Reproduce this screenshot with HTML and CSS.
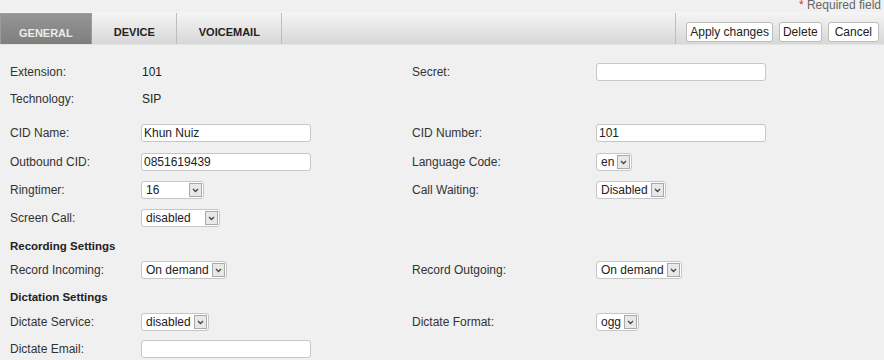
FILE: index.html
```html
<!DOCTYPE html>
<html lang="en">
<head>
    <meta charset="UTF-8">
    <title>Extension 101</title>
    <link rel="stylesheet" href="styles.css">
</head>
<body>
    <div class="required"><span class="star">*</span> Required field</div>

    <nav class="tabbar">
        <a href="#" class="tab active">GENERAL</a>
        <a href="#" class="tab">DEVICE</a>
        <a href="#" class="tab">VOICEMAIL</a>
        <div class="spacer"></div>
        <div class="actions">
            <button class="btn">Apply changes</button>
            <button class="btn">Delete</button>
            <button class="btn btn-cancel">Cancel</button>
        </div>
    </nav>

    <form class="form">
        <label class="lbl">Extension:</label>
        <span class="value">101</span>
        <label class="lbl r">Secret:</label>
        <input class="field" type="text" value="">

        <label class="lbl">Technology:</label>
        <span class="value">SIP</span>

        <label class="lbl">CID Name:</label>
        <input class="field" type="text" value="Khun Nuiz">
        <label class="lbl r">CID Number:</label>
        <input class="field" type="text" value="101">

        <label class="lbl">Outbound CID:</label>
        <input class="field" type="text" value="0851619439">
        <label class="lbl r">Language Code:</label>
        <span class="select"><span class="val">en</span><span class="arrow"><svg width="7" height="5" viewBox="0 0 7 5"><path d="M1 1l2.5 2.5L6 1" fill="none" stroke="#444" stroke-width="1.3"/></svg></span></span>

        <label class="lbl">Ringtimer:</label>
        <span class="select sel-ring"><span class="val">16</span><span class="arrow"><svg width="7" height="5" viewBox="0 0 7 5"><path d="M1 1l2.5 2.5L6 1" fill="none" stroke="#444" stroke-width="1.3"/></svg></span></span>
        <label class="lbl r">Call Waiting:</label>
        <span class="select"><span class="val">Disabled</span><span class="arrow"><svg width="7" height="5" viewBox="0 0 7 5"><path d="M1 1l2.5 2.5L6 1" fill="none" stroke="#444" stroke-width="1.3"/></svg></span></span>

        <label class="lbl">Screen Call:</label>
        <span class="select sel-screen"><span class="val">disabled</span><span class="arrow"><svg width="7" height="5" viewBox="0 0 7 5"><path d="M1 1l2.5 2.5L6 1" fill="none" stroke="#444" stroke-width="1.3"/></svg></span></span>

        <h3 class="section">Recording Settings</h3>

        <label class="lbl">Record Incoming:</label>
        <span class="select"><span class="val">On demand</span><span class="arrow"><svg width="7" height="5" viewBox="0 0 7 5"><path d="M1 1l2.5 2.5L6 1" fill="none" stroke="#444" stroke-width="1.3"/></svg></span></span>
        <label class="lbl r">Record Outgoing:</label>
        <span class="select"><span class="val">On demand</span><span class="arrow"><svg width="7" height="5" viewBox="0 0 7 5"><path d="M1 1l2.5 2.5L6 1" fill="none" stroke="#444" stroke-width="1.3"/></svg></span></span>

        <h3 class="section">Dictation Settings</h3>

        <label class="lbl">Dictate Service:</label>
        <span class="select"><span class="val">disabled</span><span class="arrow"><svg width="7" height="5" viewBox="0 0 7 5"><path d="M1 1l2.5 2.5L6 1" fill="none" stroke="#444" stroke-width="1.3"/></svg></span></span>
        <label class="lbl r">Dictate Format:</label>
        <span class="select"><span class="val">ogg</span><span class="arrow"><svg width="7" height="5" viewBox="0 0 7 5"><path d="M1 1l2.5 2.5L6 1" fill="none" stroke="#444" stroke-width="1.3"/></svg></span></span>

        <label class="lbl">Dictate Email:</label>
        <input class="field" type="text" value="">
    </form>
</body>
</html>
```

FILE: styles.css
```css
* {
    margin: 0;
    padding: 0;
    box-sizing: border-box;
    font-family: 'Liberation Sans', Arial, sans-serif;
}

body {
    background-color: #f0f0f0;
    color: #333;
    font-size: 12px;
    overflow: hidden;
}

/* Top note */
.required {
    height: 12px;
    line-height: 12px;
    margin-top: -1px;
    padding-right: 3px;
    text-align: right;
    color: #666;
}

.star {
    color: #e53030;
}

/* Tab bar */
.tabbar {
    display: flex;
    height: 33px;
    margin-top: 1px;
    background: linear-gradient(to bottom, #f5f5f5, #d7d7d7);
    border-bottom: 1px solid #e4e4e4;
}

.tab {
    padding: 12px 21px 0 22px;
    line-height: 14px;
    font-size: 11px;
    font-weight: bold;
    color: #222;
    text-decoration: none;
    border-right: 1px solid #bdbdbd;
    margin-top: 1px;
}

.tab.active {
    background: linear-gradient(to bottom, #959595, #7e7e7e);
    color: #ececec;
    border: 1px solid #9a9a9a;
    border-bottom: none;
    padding-left: 18px;
    padding-right: 18px;
}

.spacer {
    flex: 1;
}

.actions {
    display: flex;
    align-items: flex-end;
    gap: 6px;
    padding: 0 5px 2px 10px;
    border-left: 1px solid #bdbdbd;
    margin-top: 1px;
}

.btn {
    height: 20px;
    padding: 0 3px;
    background-color: white;
    border: 1px solid #bcbcbc;
    border-radius: 3px;
    font-size: 12px;
    color: #222;
    cursor: pointer;
}

.btn-cancel {
    padding: 0 6px;
}

/* Form */
.form {
    display: grid;
    grid-template-columns: 131px 271px 184px 1fr;
    grid-template-rows: 27px 34px 29px 28px 28px 28px 24px 27px 25px 27px 28px;
    align-items: start;
    justify-items: start;
    padding: 18px 0 0 10px;
}

.lbl {
    grid-column: 1;
    line-height: 18px;
    color: #333;
}

.lbl.r {
    grid-column: 3;
}

.value {
    line-height: 18px;
    padding-left: 1px;
    color: #222;
}

.section {
    grid-column: 1 / -1;
    font-size: 11.5px;
    font-weight: bold;
    line-height: 18px;
    color: #222;
}

.field {
    width: 170px;
    height: 18px;
    padding: 0 2px;
    background-color: white;
    border: 1px solid #c6c6c6;
    border-radius: 3px;
    font-size: 12px;
    color: #222;
    outline: none;
}

.select {
    display: inline-flex;
    align-items: center;
    height: 18px;
    background-color: white;
    border: 1px solid #c6c6c6;
    border-radius: 3px;
    color: #222;
}

.select .val {
    padding: 0 3px 0 4px;
    line-height: 16px;
}

.sel-ring .val {
    width: 47px;
}

.sel-screen .val {
    width: 63px;
}

.arrow {
    display: flex;
    align-items: center;
    justify-content: center;
    width: 13px;
    height: 14px;
    margin-right: 1px;
    background-color: #e8e8e8;
    border: 1px solid #a9a9a9;
}
```
